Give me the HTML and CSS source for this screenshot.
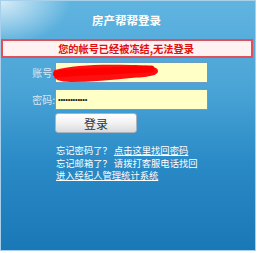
FILE: index.html
```html
<!DOCTYPE html>
<html>
<head>
<meta charset="utf-8">
<link rel="stylesheet" href="styles.css">
</head>
<body>
<div class="panel">
  <div class="title">房产帮帮登录</div>
  <div class="error">您的帐号已经被冻结,无法登录</div>
  <div class="form">
    <div class="row">
      <span class="label">账号:</span>
      <div class="field"></div>
      <svg class="scribble" width="110" height="22" viewBox="0 0 110 22">
        <path d="M4 8 C 20 3, 50 2, 80 3 C 95 3, 107 4, 107 9 C 107 14, 96 15, 80 16 C 60 18, 40 20, 20 20 C 8 20, 2 17, 2 12 C 2 10, 3 8, 4 8 Z" fill="#ff1010"/>
        <path d="M6 12 C 30 10, 60 9, 100 7" stroke="#ff0000" stroke-width="7" fill="none" stroke-linecap="round"/>
      </svg>
    </div>
    <div class="row">
      <span class="label">密码:</span>
      <div class="field"><span class="dots">••••••••••••</span></div>
    </div>
    <div class="btnrow">
      <div class="btn">登录</div>
    </div>
    <div class="links">
      <div>忘记密码了？ <span class="u">点击这里找回密码</span></div>
      <div>忘记邮箱了？ 请拨打客服电话找回</div>
      <div><span class="u">进入经纪人管理统计系统</span></div>
    </div>
  </div>
</div>
</body>
</html>
```
FILE: styles.css
```css
html, body {
  margin: 0;
  padding: 0;
  background: #ffffff;
}
body {
  font-family: "Noto Sans CJK SC", "Liberation Sans", sans-serif;
}
.panel {
  width: 254px;
  height: 249px;
  border: 1px solid #a8d0ea;
  background:
    radial-gradient(ellipse 70px 45px at 0px 0px, rgba(255,255,255,0.75), rgba(255,255,255,0) 100%),
    linear-gradient(to bottom, #60b4e0 0%, #4aa4d6 35%, #2a8ac6 65%, #1978b6 100%);
  display: flex;
  flex-direction: column;
  position: relative;
}
.title {
  height: 38px;
  display: flex;
  align-items: center;
  justify-content: center;
  color: #ffffff;
  font-size: 11.5px;
  font-weight: bold;
  padding-right: 3px;
  box-sizing: border-box;
}
.error {
  margin: 0 2px 0 0;
  height: 19px;
  box-sizing: border-box;
  border: 2px solid #e0505a;
  background: #fff2f2;
  color: #e01010;
  font-size: 10.2px;
  font-weight: bold;
  display: flex;
  align-items: center;
  justify-content: center;
  padding-right: 2px;
}
.form {
  padding-top: 4px;
  display: flex;
  flex-direction: column;
}
.row {
  display: flex;
  align-items: center;
  height: 21px;
  margin-bottom: 6px;
  position: relative;
}
.label {
  width: 54px;
  text-align: right;
  box-sizing: border-box;
  color: #d6e8f6;
  font-size: 10px;
}
.field {
  width: 153px;
  height: 21px;
  box-sizing: border-box;
  border: 1px solid #6c9cc2;
  background: #ffffc6;
  display: flex;
  align-items: center;
  padding-left: 2px;
}
.dots {
  font-family: "Liberation Sans", sans-serif;
  font-size: 7.5px;
  color: #202020;
  letter-spacing: -0.2px;
}
.scribble {
  position: absolute;
  left: 50px;
  top: 0px;
}
.btnrow {
  padding-left: 54px;
  margin-top: -3px;
}
.btn {
  width: 82px;
  height: 20px;
  box-sizing: border-box;
  border: 1px solid #a9b4bc;
  border-radius: 3px;
  background: linear-gradient(to bottom, #ffffff 0%, #f2f2f2 50%, #d8dadc 100%);
  color: #333333;
  font-size: 12px;
  display: flex;
  align-items: center;
  justify-content: center;
}
.links {
  padding-left: 55px;
  margin-top: 11px;
  color: #ffffff;
  font-size: 9.3px;
  line-height: 12.5px;
}
.u {
  text-decoration: underline;
}
```
